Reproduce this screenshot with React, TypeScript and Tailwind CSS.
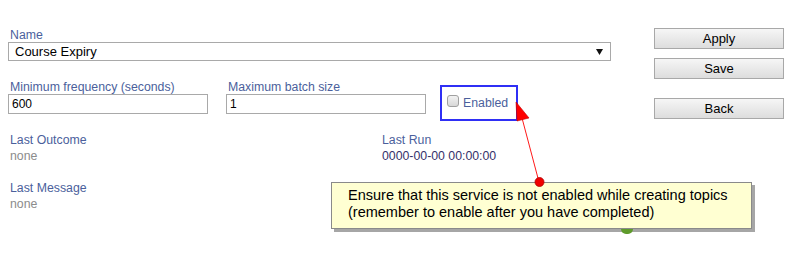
import React from "react";

const labelCls = "text-[12.3px] leading-[13px] text-[#4b5f9c]";
const noneCls = "mt-[2px] text-[12.3px] leading-[14px] text-[#8c8c8c]";

const Button: React.FC<{ label: string; className?: string }> = ({ label, className }) => (
  <button
    type="button"
    className={`h-[21px] w-[130px] border border-[#a8a8a8] bg-gradient-to-b from-[#f6f6f6] to-[#dddddd] text-[13px] leading-[19px] text-black ${className ?? ""}`}
  >
    {label}
  </button>
);

export default function App() {
  return (
    <div className="relative h-[253px] w-[790px] overflow-hidden bg-white font-['Liberation_Sans',Arial,sans-serif]">
      <div className="flex">
        <div className="w-[646px] pl-[8px] pt-[29px]">
          <p className={`${labelCls} pl-[2px]`}>Name</p>
          <div className="flex h-[19px] w-[603px] items-center justify-between border border-[#a9a9a9] bg-white pl-[6px] pr-[7px]">
            <span className="text-[13px] leading-[17px] text-black">Course Expiry</span>
            <svg width="7" height="7" viewBox="0 0 7 7">
              <polygon points="0,1 7,1 3.5,7" fill="#111" />
            </svg>
          </div>

          <div className="mt-[20px] flex items-start">
            <div className="w-[200px]">
              <p className={`${labelCls} pl-[2px]`}>Minimum frequency (seconds)</p>
              <div className="h-[20px] w-[200px] border border-[#a9a9a9] px-[3px] text-[12px] leading-[18px] text-black">600</div>
            </div>
            <div className="ml-[18px] w-[200px]">
              <p className={`${labelCls} pl-[2px]`}>Maximum batch size</p>
              <div className="h-[20px] w-[200px] border border-[#a9a9a9] px-[3px] text-[12px] leading-[18px] text-black">1</div>
            </div>
            <div className="-mb-[7px] ml-[14px] mt-[4px] flex h-[36px] w-[78px] items-start border-2 border-[#2f2ff5] pl-[5px] pt-[8px]">
              <span className="h-[12px] w-[12px] rounded-[3px] border border-[#a0a0a0] bg-gradient-to-b from-[#f2f2f2] to-[#d8d8d8]" />
              <span className="ml-[4px] mt-[1px] text-[12.3px] leading-[14px] text-[#4b5f9c]">Enabled</span>
            </div>
          </div>

          <div className="mt-[20px] grid grid-cols-[372px_1fr] pl-[2px]">
            <div>
              <p className={labelCls}>Last Outcome</p>
              <p className={noneCls}>none</p>
              <p className={`${labelCls} mt-[19px]`}>Last Message</p>
              <p className={noneCls}>none</p>
            </div>
            <div>
              <p className={labelCls}>Last Run</p>
              <p className="mt-[2px] text-[12.3px] leading-[14px] text-[#35316a]">0000-00-00 00:00:00</p>
            </div>
          </div>
        </div>

        <div className="flex flex-col pl-[8px] pt-[28px]">
          <Button label="Apply" />
          <Button label="Save" className="mt-[9px]" />
          <Button label="Back" className="mt-[19px]" />
        </div>
      </div>

      {/* annotation note */}
      <div className="absolute left-[331px] top-[182px] h-[47px] w-[421px] border border-[#8a8a8a] bg-[#ffffd2] pl-[16px] pt-[4px] text-[14.5px] leading-[17px] text-black shadow-[3px_3px_0_#a6a6a6]">
        <p>Ensure that this service is not enabled while creating topics</p>
        <p>(remember to enable after you have completed)</p>
      </div>

      {/* green marker peeking out below the note */}
      <div className="absolute left-[621px] top-[229px] h-[5px] w-[12px] rounded-b-full bg-[#5f9b2c]" />

      <svg className="absolute left-0 top-0" width="790" height="253" viewBox="0 0 790 253">
        <line x1="539" y1="182" x2="522" y2="118" stroke="#ff1a1a" strokeWidth="1" />
        <polygon points="516,102 517,121 529,118" fill="#ff0000" stroke="#c00000" strokeWidth="0.6" />
        <circle cx="539.5" cy="182" r="4.5" fill="#f00000" stroke="#b00000" strokeWidth="0.8" />
      </svg>
    </div>
  );
}
